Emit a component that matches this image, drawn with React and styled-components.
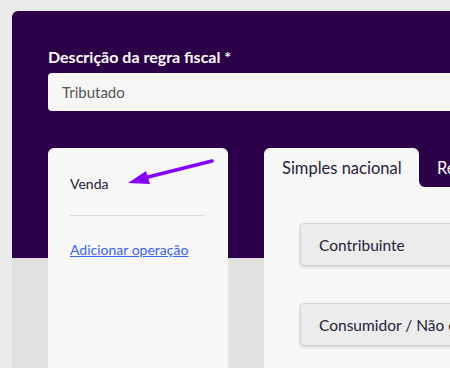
import React from 'react';
import styled, { createGlobalStyle } from 'styled-components';

const GlobalStyle = createGlobalStyle`
  html, body {
    margin: 0;
    padding: 0;
    background: #ebebeb;
    overflow: hidden;
    font-family: Lato, "Noto Sans", "Liberation Sans", sans-serif;
  }
`;

const Page = styled.div`
  position: relative;
  width: 450px;
  height: 368px;
  overflow: hidden;
  padding: 11px 0 0 12px;
  box-sizing: border-box;
`;

const Shell = styled.div`
  width: 720px;
  height: 420px;
  border-radius: 6px 0 0 0;
  background: linear-gradient(#2c0049 0, #2c0049 247px, #e1e1e1 247px);
  padding: 36px 0 0 36px;
  box-sizing: border-box;
`;

const Label = styled.label`
  display: block;
  color: #ffffff;
  font-weight: 700;
  font-size: 16px;
  line-height: 20px;
  margin-bottom: 6px;
`;

const Input = styled.div`
  width: 640px;
  height: 38px;
  border-radius: 4px;
  background: #f6f6f6;
  color: #555555;
  font-size: 15px;
  display: flex;
  align-items: center;
  padding-left: 14px;
  box-sizing: border-box;
`;

const Columns = styled.div`
  display: flex;
  gap: 36px;
  margin-top: 37px;
`;

const SideCard = styled.div`
  width: 180px;
  height: 260px;
  background: #f7f7f7;
  border-radius: 6px 6px 0 0;
  padding: 26px 23px 0 22px;
  box-sizing: border-box;
`;

const Operation = styled.div`
  color: #25223a;
  font-size: 14px;
  line-height: 20px;
`;

const Divider = styled.hr`
  border: 0;
  border-top: 1px solid #dadada;
  margin: 21px 0 24px;
`;

const AddLink = styled.a`
  display: block;
  color: #3a63ef;
  font-size: 14px;
  line-height: 20px;
  text-decoration: underline;
  cursor: pointer;
`;

const Main = styled.div`
  flex: 1;
  display: flex;
  flex-direction: column;
`;

const TabRow = styled.div`
  display: flex;
  height: 39px;
`;

const Tab = styled.div`
  padding: 0 18px;
  display: flex;
  align-items: center;
  font-size: 16.5px;
  white-space: nowrap;
  color: ${(p) => (p.$active ? '#25223a' : '#ffffff')};
  background: ${(p) => (p.$active ? '#f7f7f7' : '#2c0049')};
  border-radius: ${(p) => (p.$active ? '6px 6px 0 0' : '0 0 0 6px')};
  width: ${(p) => (p.$active ? '119px' : 'auto')};
  flex: ${(p) => (p.$active ? '0 0 auto' : '1')};
`;

const TabBack = styled.div`
  flex: 1;
  display: flex;
  background: #f7f7f7;
`;

const Panel = styled.div`
  flex: 1;
  background: #f7f7f7;
  padding: 36px 0 0 36px;
  display: flex;
  flex-direction: column;
  gap: 37px;
`;

const Accordion = styled.div`
  height: 43px;
  box-sizing: border-box;
  background: #ececec;
  border: 1px solid #d4d4d4;
  border-radius: 4px 0 0 4px;
  box-shadow: 0 1px 3px rgba(0, 0, 0, 0.18);
  display: flex;
  align-items: center;
  padding-left: 18px;
  font-size: 15.5px;
  white-space: nowrap;
  color: #25223a;
`;

const Arrow = styled.svg`
  position: absolute;
  left: 0;
  top: 0;
  pointer-events: none;
`;

export default function App() {
  return (
    <>
      <GlobalStyle />
      <Page>
        <Shell>
          <Label>Descrição da regra fiscal *</Label>
          <Input>Tributado</Input>
          <Columns>
            <SideCard>
              <Operation>Venda</Operation>
              <Divider />
              <AddLink>Adicionar operação</AddLink>
            </SideCard>
            <Main>
              <TabRow>
                <Tab $active>Simples nacional</Tab>
                <TabBack>
                  <Tab>Regime normal</Tab>
                </TabBack>
              </TabRow>
              <Panel>
                <Accordion>Contribuinte</Accordion>
                <Accordion>Consumidor / Não contribuinte</Accordion>
              </Panel>
            </Main>
          </Columns>
        </Shell>
        <Arrow width="450" height="368" viewBox="0 0 450 368">
          <line x1="212" y1="161" x2="144" y2="178" stroke="#8400ff" strokeWidth="3.5" strokeLinecap="round" />
          <polygon points="128,183 146,171 150,184" fill="#8400ff" />
        </Arrow>
      </Page>
    </>
  );
}
